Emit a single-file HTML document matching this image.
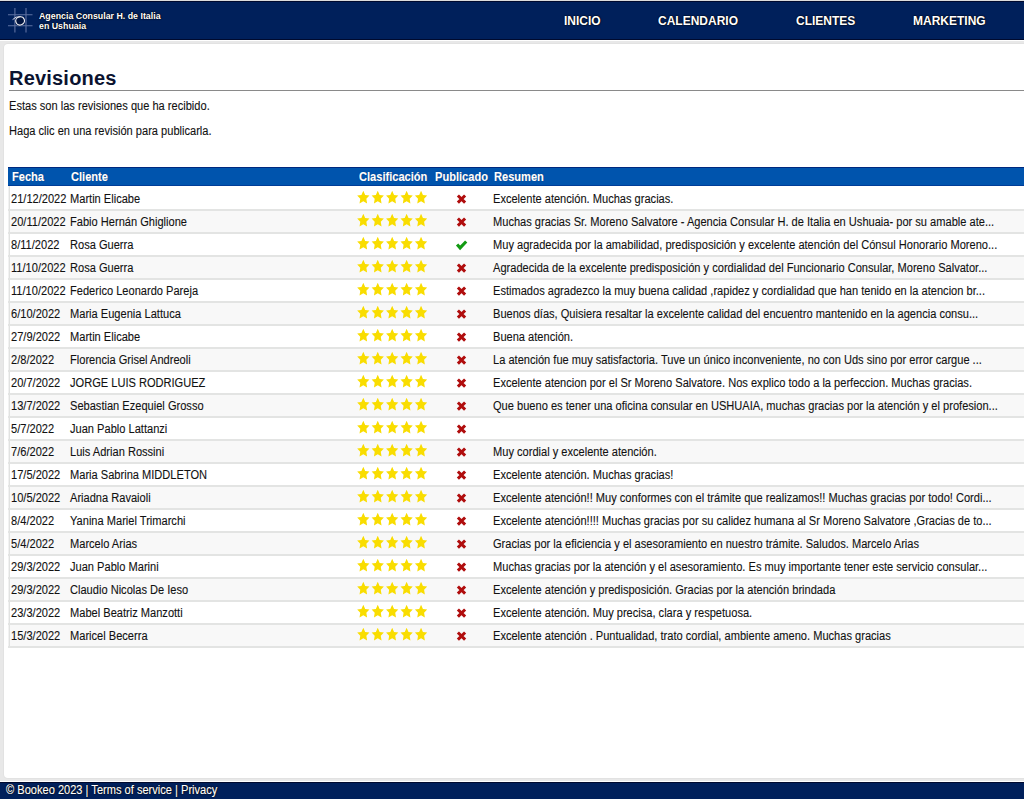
<!DOCTYPE html>
<html lang="es">
<head>
<meta charset="utf-8">
<title>Revisiones</title>
<style>
*{box-sizing:border-box}
html,body{margin:0;padding:0}
body{width:1024px;height:799px;overflow:hidden;background:#e8e8e8;font-family:"Liberation Sans",sans-serif;font-size:12px;color:#111;position:relative}
#hdr{position:absolute;left:0;top:0;width:1024px;height:41px;background:#00205b;border-top:1px solid #dcdcdc;border-bottom:1px solid #fff;box-shadow:inset 0 1px 0 #000a2e, inset 0 -1px 0 #000a2e}
#logo{position:absolute;left:6px;top:5px;width:30px;height:30px}
#biz{position:absolute;left:39px;top:10px;color:#fff;font-weight:bold;font-size:9px;line-height:10px;transform:scaleX(.98);transform-origin:0 0;white-space:nowrap;text-shadow:0 0 2px #000,0 0 1px #000}
#nav a{position:absolute;top:13px;color:#fff;font-weight:bold;font-size:12px;line-height:15px;text-shadow:0 0 2px #000,0 0 1px #000;text-decoration:none;white-space:nowrap}
#main{position:absolute;left:4px;top:44px;width:1030px;height:734px;background:#fff;border-radius:4px;box-shadow:0 0 0 1px #e2e2e2}
h1{position:absolute;left:5px;top:23px;margin:0;font-size:20px;line-height:23px;letter-spacing:0.2px;font-weight:bold;color:#0b1330;width:1020px;border-bottom:1px solid #8a8a8a}
.t{display:inline-block;transform:scaleX(.923);transform-origin:0 50%;white-space:nowrap;-webkit-text-stroke:0.1px currentColor}
p{position:absolute;left:4.5px;margin:0;line-height:14px;white-space:nowrap}
table{position:absolute;left:4px;top:123px;width:1021px;border-collapse:separate;border-spacing:0;table-layout:fixed}
th{background:#0054ad;color:#fff;font-weight:bold;text-align:left;height:19px;padding:0 0 0 3px;font-size:12px;white-space:nowrap;vertical-align:middle;box-shadow:inset 0 1px 0 #00297e,inset 0 -1px 0 #003d98;text-shadow:0 0 1px #002a66}
th .t{position:relative;top:0px}
td{height:23px;padding:0 0 0 2px;border-bottom:2px solid #e3e4e3;white-space:nowrap;overflow:visible;vertical-align:middle}
td .t{position:relative;top:0px}
tr.e td{background:#fff}
tr.o td{background:#f8f8f8}
.c1{width:60px}.c2{width:288px}.c3{width:76px}.c4{width:59px;text-align:center}
th.c1{padding-left:4px}
tbody tr:first-child td{height:25px;padding-top:2px}
tr td.c1{padding-left:3px;background-image:linear-gradient(90deg,#f2f2f2 0,#f2f2f2 1px,#e1e2e1 1px,#e1e2e1 2px,rgba(255,255,255,0) 2px)}
td.c3{padding-left:1px;font-size:0}
td.c4{padding-left:0;font-size:0}
.st{width:14.45px;height:14px;display:inline-block;vertical-align:middle;position:relative;top:-1px;left:-0.9px;background:#f9dd00;clip-path:polygon(7.20px 0.25px,9.08px 4.46px,13.33px 5.09px,10.24px 8.32px,10.99px 12.91px,7.20px 10.70px,3.41px 12.91px,4.16px 8.32px,1.07px 5.09px,5.32px 4.46px)}
.ic{width:13px;height:12px;display:inline-block;vertical-align:middle;position:relative;top:0.5px;left:-0.5px}
#ftr{position:absolute;left:0;top:781px;width:1024px;height:18px;background:#00205b;border-top:1px solid #fff;box-shadow:inset 0 1px 0 #000a2e;color:#fff;font-size:12px;line-height:17px;padding-left:6px;text-shadow:0 0 2px #000,0 0 1px #000;white-space:nowrap}
</style>
</head>
<body>
<div id="hdr">
<svg id="logo" viewBox="0 0 30 30">
<g stroke="#7d8cb8" stroke-width="1.1" fill="none" opacity="0.75">
<path d="M8.9 2 V26.5 M20 2 V26.5 M2 8.8 H26.5 M2 19.8 H26.5"/>
</g>
<ellipse cx="14.1" cy="14.9" rx="5.2" ry="4.9" fill="#00143f" stroke="none" transform="rotate(-20 14.1 14.9)"/>
<ellipse cx="14.1" cy="14.9" rx="4.4" ry="4.1" fill="none" stroke="#f4f4f8" stroke-width="1.2" transform="rotate(-20 14.1 14.9)"/>
<path d="M6.6 13.6 Q9.5 10.2 14.6 10.6" stroke="#e8e8f0" stroke-width="0.9" fill="none"/>
</svg>
<div id="biz">Agencia Consular H. de Italia<br>en Ushuaia</div>
<div id="nav">
<a style="left:564px">INICIO</a>
<a style="left:658px">CALENDARIO</a>
<a style="left:796px">CLIENTES</a>
<a style="left:913px">MARKETING</a>
</div>
</div>
<div id="main">
<h1>Revisiones</h1>
<p style="top:55px"><span class="t">Estas son las revisiones que ha recibido.</span></p>
<p style="top:80px"><span class="t">Haga clic en una revisión para publicarla.</span></p>
<table>
<thead><tr><th class="c1"><span class="t">Fecha</span></th><th class="c2"><span class="t">Cliente</span></th><th class="c3"><span class="t">Clasificación</span></th><th class="c4" style="text-align:left"><span class="t">Publicado</span></th><th class="c5"><span class="t">Resumen</span></th></tr></thead>
<tbody>
<tr class="e"><td class="c1"><span class="t">21/12/2022</span></td><td class="c2"><span class="t">Martin Elicabe</span></td><td class="c3"><i class="st"></i><i class="st"></i><i class="st"></i><i class="st"></i><i class="st"></i></td><td class="c4"><svg class="ic" viewBox="0 0 13 12"><path d="M2.9 2.45 L10.1 9.65 M10.1 2.45 L2.9 9.65" stroke="#b00d0d" stroke-width="3" fill="none"/></svg></td><td class="c5"><span class="t">Excelente atención. Muchas gracias.</span></td></tr>
<tr class="o"><td class="c1"><span class="t">20/11/2022</span></td><td class="c2"><span class="t">Fabio Hernán Ghiglione</span></td><td class="c3"><i class="st"></i><i class="st"></i><i class="st"></i><i class="st"></i><i class="st"></i></td><td class="c4"><svg class="ic" viewBox="0 0 13 12"><path d="M2.9 2.45 L10.1 9.65 M10.1 2.45 L2.9 9.65" stroke="#b00d0d" stroke-width="3" fill="none"/></svg></td><td class="c5"><span class="t">Muchas gracias Sr. Moreno Salvatore - Agencia Consular H. de Italia en Ushuaia- por su amable ate...</span></td></tr>
<tr class="e"><td class="c1"><span class="t">8/11/2022</span></td><td class="c2"><span class="t">Rosa Guerra</span></td><td class="c3"><i class="st"></i><i class="st"></i><i class="st"></i><i class="st"></i><i class="st"></i></td><td class="c4"><svg class="ic" viewBox="0 0 13 12"><path d="M2.1 5.5 L5.1 8.9 L11.2 2.5" stroke="#129a12" stroke-width="3.1" fill="none"/></svg></td><td class="c5"><span class="t">Muy agradecida por la amabilidad, predisposición y excelente atención del Cónsul Honorario Moreno...</span></td></tr>
<tr class="o"><td class="c1"><span class="t">11/10/2022</span></td><td class="c2"><span class="t">Rosa Guerra</span></td><td class="c3"><i class="st"></i><i class="st"></i><i class="st"></i><i class="st"></i><i class="st"></i></td><td class="c4"><svg class="ic" viewBox="0 0 13 12"><path d="M2.9 2.45 L10.1 9.65 M10.1 2.45 L2.9 9.65" stroke="#b00d0d" stroke-width="3" fill="none"/></svg></td><td class="c5"><span class="t">Agradecida de la excelente predisposición y cordialidad del Funcionario Consular, Moreno Salvator...</span></td></tr>
<tr class="e"><td class="c1"><span class="t">11/10/2022</span></td><td class="c2"><span class="t">Federico Leonardo Pareja</span></td><td class="c3"><i class="st"></i><i class="st"></i><i class="st"></i><i class="st"></i><i class="st"></i></td><td class="c4"><svg class="ic" viewBox="0 0 13 12"><path d="M2.9 2.45 L10.1 9.65 M10.1 2.45 L2.9 9.65" stroke="#b00d0d" stroke-width="3" fill="none"/></svg></td><td class="c5"><span class="t">Estimados agradezco la muy buena calidad ,rapidez y cordialidad que han tenido en la atencion br...</span></td></tr>
<tr class="o"><td class="c1"><span class="t">6/10/2022</span></td><td class="c2"><span class="t">Maria Eugenia Lattuca</span></td><td class="c3"><i class="st"></i><i class="st"></i><i class="st"></i><i class="st"></i><i class="st"></i></td><td class="c4"><svg class="ic" viewBox="0 0 13 12"><path d="M2.9 2.45 L10.1 9.65 M10.1 2.45 L2.9 9.65" stroke="#b00d0d" stroke-width="3" fill="none"/></svg></td><td class="c5"><span class="t">Buenos días, Quisiera resaltar la excelente calidad del encuentro mantenido en la agencia consu...</span></td></tr>
<tr class="e"><td class="c1"><span class="t">27/9/2022</span></td><td class="c2"><span class="t">Martin Elicabe</span></td><td class="c3"><i class="st"></i><i class="st"></i><i class="st"></i><i class="st"></i><i class="st"></i></td><td class="c4"><svg class="ic" viewBox="0 0 13 12"><path d="M2.9 2.45 L10.1 9.65 M10.1 2.45 L2.9 9.65" stroke="#b00d0d" stroke-width="3" fill="none"/></svg></td><td class="c5"><span class="t">Buena atención.</span></td></tr>
<tr class="o"><td class="c1"><span class="t">2/8/2022</span></td><td class="c2"><span class="t">Florencia Grisel Andreoli</span></td><td class="c3"><i class="st"></i><i class="st"></i><i class="st"></i><i class="st"></i><i class="st"></i></td><td class="c4"><svg class="ic" viewBox="0 0 13 12"><path d="M2.9 2.45 L10.1 9.65 M10.1 2.45 L2.9 9.65" stroke="#b00d0d" stroke-width="3" fill="none"/></svg></td><td class="c5"><span class="t">La atención fue muy satisfactoria. Tuve un único inconveniente, no con Uds sino por error cargue ...</span></td></tr>
<tr class="e"><td class="c1"><span class="t">20/7/2022</span></td><td class="c2"><span class="t">JORGE LUIS RODRIGUEZ</span></td><td class="c3"><i class="st"></i><i class="st"></i><i class="st"></i><i class="st"></i><i class="st"></i></td><td class="c4"><svg class="ic" viewBox="0 0 13 12"><path d="M2.9 2.45 L10.1 9.65 M10.1 2.45 L2.9 9.65" stroke="#b00d0d" stroke-width="3" fill="none"/></svg></td><td class="c5"><span class="t">Excelente atencion por el Sr Moreno Salvatore. Nos explico todo a la perfeccion. Muchas gracias.</span></td></tr>
<tr class="o"><td class="c1"><span class="t">13/7/2022</span></td><td class="c2"><span class="t">Sebastian Ezequiel Grosso</span></td><td class="c3"><i class="st"></i><i class="st"></i><i class="st"></i><i class="st"></i><i class="st"></i></td><td class="c4"><svg class="ic" viewBox="0 0 13 12"><path d="M2.9 2.45 L10.1 9.65 M10.1 2.45 L2.9 9.65" stroke="#b00d0d" stroke-width="3" fill="none"/></svg></td><td class="c5"><span class="t">Que bueno es tener una oficina consular en USHUAIA, muchas gracias por la atención y el profesion...</span></td></tr>
<tr class="e"><td class="c1"><span class="t">5/7/2022</span></td><td class="c2"><span class="t">Juan Pablo Lattanzi</span></td><td class="c3"><i class="st"></i><i class="st"></i><i class="st"></i><i class="st"></i><i class="st"></i></td><td class="c4"><svg class="ic" viewBox="0 0 13 12"><path d="M2.9 2.45 L10.1 9.65 M10.1 2.45 L2.9 9.65" stroke="#b00d0d" stroke-width="3" fill="none"/></svg></td><td class="c5"><span class="t"></span></td></tr>
<tr class="o"><td class="c1"><span class="t">7/6/2022</span></td><td class="c2"><span class="t">Luis Adrian Rossini</span></td><td class="c3"><i class="st"></i><i class="st"></i><i class="st"></i><i class="st"></i><i class="st"></i></td><td class="c4"><svg class="ic" viewBox="0 0 13 12"><path d="M2.9 2.45 L10.1 9.65 M10.1 2.45 L2.9 9.65" stroke="#b00d0d" stroke-width="3" fill="none"/></svg></td><td class="c5"><span class="t">Muy cordial y excelente atención.</span></td></tr>
<tr class="e"><td class="c1"><span class="t">17/5/2022</span></td><td class="c2"><span class="t">Maria Sabrina MIDDLETON</span></td><td class="c3"><i class="st"></i><i class="st"></i><i class="st"></i><i class="st"></i><i class="st"></i></td><td class="c4"><svg class="ic" viewBox="0 0 13 12"><path d="M2.9 2.45 L10.1 9.65 M10.1 2.45 L2.9 9.65" stroke="#b00d0d" stroke-width="3" fill="none"/></svg></td><td class="c5"><span class="t">Excelente atención. Muchas gracias!</span></td></tr>
<tr class="o"><td class="c1"><span class="t">10/5/2022</span></td><td class="c2"><span class="t">Ariadna Ravaioli</span></td><td class="c3"><i class="st"></i><i class="st"></i><i class="st"></i><i class="st"></i><i class="st"></i></td><td class="c4"><svg class="ic" viewBox="0 0 13 12"><path d="M2.9 2.45 L10.1 9.65 M10.1 2.45 L2.9 9.65" stroke="#b00d0d" stroke-width="3" fill="none"/></svg></td><td class="c5"><span class="t">Excelente atención!! Muy conformes con el trámite que realizamos!! Muchas gracias por todo! Cordi...</span></td></tr>
<tr class="e"><td class="c1"><span class="t">8/4/2022</span></td><td class="c2"><span class="t">Yanina Mariel Trimarchi</span></td><td class="c3"><i class="st"></i><i class="st"></i><i class="st"></i><i class="st"></i><i class="st"></i></td><td class="c4"><svg class="ic" viewBox="0 0 13 12"><path d="M2.9 2.45 L10.1 9.65 M10.1 2.45 L2.9 9.65" stroke="#b00d0d" stroke-width="3" fill="none"/></svg></td><td class="c5"><span class="t">Excelente atención!!!! Muchas gracias por su calidez humana al Sr Moreno Salvatore ,Gracias de to...</span></td></tr>
<tr class="o"><td class="c1"><span class="t">5/4/2022</span></td><td class="c2"><span class="t">Marcelo Arias</span></td><td class="c3"><i class="st"></i><i class="st"></i><i class="st"></i><i class="st"></i><i class="st"></i></td><td class="c4"><svg class="ic" viewBox="0 0 13 12"><path d="M2.9 2.45 L10.1 9.65 M10.1 2.45 L2.9 9.65" stroke="#b00d0d" stroke-width="3" fill="none"/></svg></td><td class="c5"><span class="t">Gracias por la eficiencia y el asesoramiento en nuestro trámite. Saludos. Marcelo Arias</span></td></tr>
<tr class="e"><td class="c1"><span class="t">29/3/2022</span></td><td class="c2"><span class="t">Juan Pablo Marini</span></td><td class="c3"><i class="st"></i><i class="st"></i><i class="st"></i><i class="st"></i><i class="st"></i></td><td class="c4"><svg class="ic" viewBox="0 0 13 12"><path d="M2.9 2.45 L10.1 9.65 M10.1 2.45 L2.9 9.65" stroke="#b00d0d" stroke-width="3" fill="none"/></svg></td><td class="c5"><span class="t">Muchas gracias por la atención y el asesoramiento. Es muy importante tener este servicio consular...</span></td></tr>
<tr class="o"><td class="c1"><span class="t">29/3/2022</span></td><td class="c2"><span class="t">Claudio Nicolas De Ieso</span></td><td class="c3"><i class="st"></i><i class="st"></i><i class="st"></i><i class="st"></i><i class="st"></i></td><td class="c4"><svg class="ic" viewBox="0 0 13 12"><path d="M2.9 2.45 L10.1 9.65 M10.1 2.45 L2.9 9.65" stroke="#b00d0d" stroke-width="3" fill="none"/></svg></td><td class="c5"><span class="t">Excelente atención y predisposición. Gracias por la atención brindada</span></td></tr>
<tr class="e"><td class="c1"><span class="t">23/3/2022</span></td><td class="c2"><span class="t">Mabel Beatriz Manzotti</span></td><td class="c3"><i class="st"></i><i class="st"></i><i class="st"></i><i class="st"></i><i class="st"></i></td><td class="c4"><svg class="ic" viewBox="0 0 13 12"><path d="M2.9 2.45 L10.1 9.65 M10.1 2.45 L2.9 9.65" stroke="#b00d0d" stroke-width="3" fill="none"/></svg></td><td class="c5"><span class="t">Excelente atención. Muy precisa, clara y respetuosa.</span></td></tr>
<tr class="o"><td class="c1"><span class="t">15/3/2022</span></td><td class="c2"><span class="t">Maricel Becerra</span></td><td class="c3"><i class="st"></i><i class="st"></i><i class="st"></i><i class="st"></i><i class="st"></i></td><td class="c4"><svg class="ic" viewBox="0 0 13 12"><path d="M2.9 2.45 L10.1 9.65 M10.1 2.45 L2.9 9.65" stroke="#b00d0d" stroke-width="3" fill="none"/></svg></td><td class="c5"><span class="t">Excelente atención . Puntualidad, trato cordial, ambiente ameno. Muchas gracias</span></td></tr>
</tbody>
</table>
</div>
<div id="ftr"><span class="t">© Bookeo 2023 | Terms of service | Privacy</span></div>
</body>
</html>
